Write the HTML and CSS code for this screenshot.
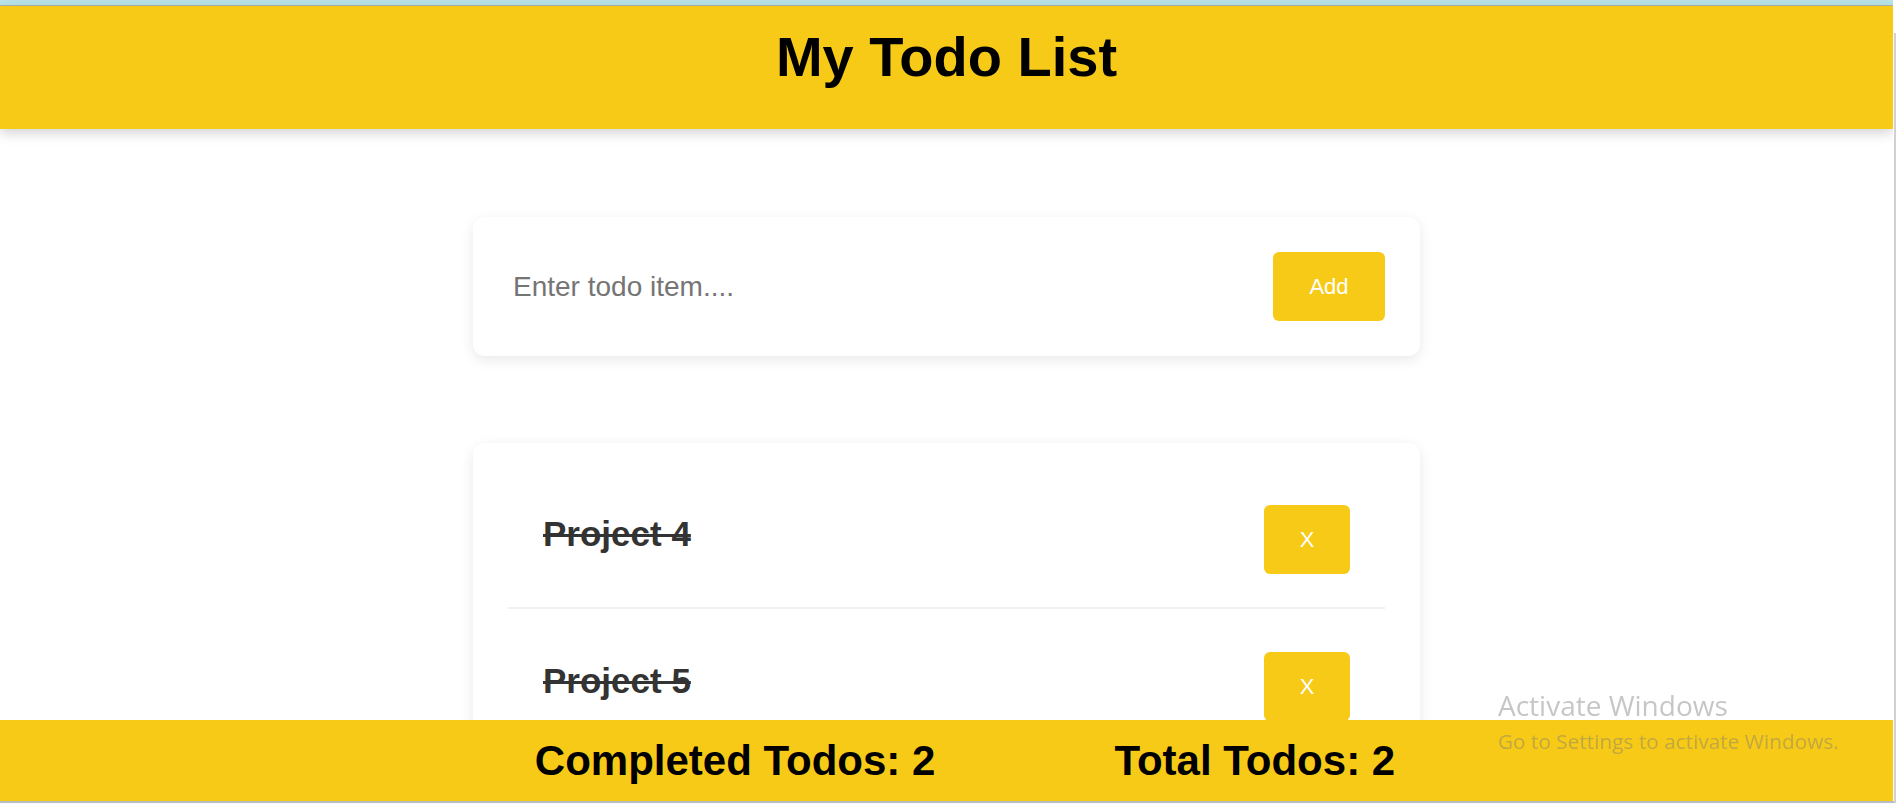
FILE: index.html
```html
<!DOCTYPE html>
<html lang="en">
<head>
<meta charset="utf-8">
<title>My Todo List</title>
<link rel="stylesheet" href="styles.css">
</head>
<body>
  <div class="chrome-top"></div>
  <div class="page">
    <header class="header">
      <h1 class="title">My Todo List</h1>
    </header>
    <main class="main">
      <form class="card input-card">
        <input class="todo-input" type="text" placeholder="Enter todo item....">
        <button class="btn add-btn" type="button">Add</button>
      </form>
      <ul class="card todo-list">
        <li class="todo-item">
          <span class="todo-text done">Project 4</span>
          <button class="btn del-btn" type="button">X</button>
        </li>
        <li class="todo-item">
          <span class="todo-text done">Project 5</span>
          <button class="btn del-btn" type="button">X</button>
        </li>
      </ul>
    </main>
  </div>
  <footer class="footer">
    <h2 class="stat">Completed Todos: 2</h2>
    <h2 class="stat">Total Todos: 2</h2>
  </footer>
  <div class="chrome-bottom"></div>
  <div class="chrome-right"></div>
  <div class="watermark">
    <div class="wm-title">Activate Windows</div>
    <div class="wm-sub">Go to Settings to activate Windows.</div>
  </div>
</body>
</html>
```
FILE: styles.css
```css
html, body {
  margin: 0;
  padding: 0;
  background: #ffffff;
  overflow: hidden;
}

body {
  font-family: "Liberation Sans", Arial, sans-serif;
  width: 1893px;
  height: 803px;
}

.chrome-top {
  height: 5px;
  background: #b9e3e8;
  border-bottom: 1px solid #a9b4b6;
}

.page {
  display: flex;
  flex-direction: column;
}

.header {
  background: #f7ca18;
  height: 123px;
  box-sizing: border-box;
  padding-top: 18px;
  box-shadow: 0 4px 12px rgba(0, 0, 0, 0.18);
  text-align: center;
}

.title {
  margin: 0;
  font-size: 56px;
  font-weight: 700;
  color: #000;
}

.main {
  width: 947px;
  margin: 0 auto;
  display: flex;
  flex-direction: column;
  gap: 87px;
  padding-top: 88px;
}

.card {
  background: #fff;
  border-radius: 12px;
  box-shadow: 0 4px 14px rgba(0, 0, 0, 0.09);
}

.input-card {
  margin: 0;
  display: flex;
  align-items: center;
  gap: 20px;
  padding: 35px;
}

.todo-input {
  flex: 1;
  border: none;
  outline: none;
  height: 69px;
  padding: 0 5px;
  font-family: "Liberation Sans", Arial, sans-serif;
  font-size: 28px;
  color: #333;
  background: transparent;
}

.todo-input::placeholder {
  color: #757575;
}

.btn {
  border: none;
  border-radius: 6px;
  background: #f7ca18;
  color: #fff;
  font-family: "Liberation Sans", Arial, sans-serif;
  font-size: 22px;
  cursor: pointer;
}

.add-btn {
  width: 112px;
  height: 69px;
}

.todo-list {
  list-style: none;
  margin: 0;
  padding: 19px 35px 20px;
}

.todo-item {
  display: flex;
  align-items: center;
  justify-content: space-between;
  margin-top: 10px;
  padding: 33px 35px;
  border-bottom: 2px solid #f0f0f0;
}

.todo-text {
  font-size: 35px;
  font-weight: 700;
  color: #333;
  margin-bottom: 11px;
}

.todo-text.done {
  text-decoration: line-through;
}

.del-btn {
  width: 86px;
  height: 69px;
}

.footer {
  position: fixed;
  left: 0;
  bottom: 2px;
  width: 1893px;
  height: 81px;
  background: #f7ca18;
  display: flex;
  align-items: center;
  justify-content: center;
  gap: 179px;
  padding-left: 37px;
  box-sizing: border-box;
}

.stat {
  margin: 0;
  font-size: 42px;
  font-weight: 700;
  color: #000;
}

.chrome-bottom {
  position: fixed;
  left: 0;
  right: 0;
  bottom: 0;
  height: 2px;
  background: #b6bec0;
}

.chrome-right {
  position: fixed;
  right: 0;
  top: 33px;
  bottom: 0;
  width: 2px;
  background: #d0d0d0;
}

.watermark {
  position: fixed;
  left: 1498px;
  top: 686px;
  font-family: "Open Sans", "Noto Sans", sans-serif;
  color: rgba(120, 120, 120, 0.42);
  pointer-events: none;
}

.wm-title {
  font-size: 28px;
  line-height: 38px;
}

.wm-sub {
  font-size: 20.8px;
  line-height: 28px;
  margin-top: 3px;
}
```
